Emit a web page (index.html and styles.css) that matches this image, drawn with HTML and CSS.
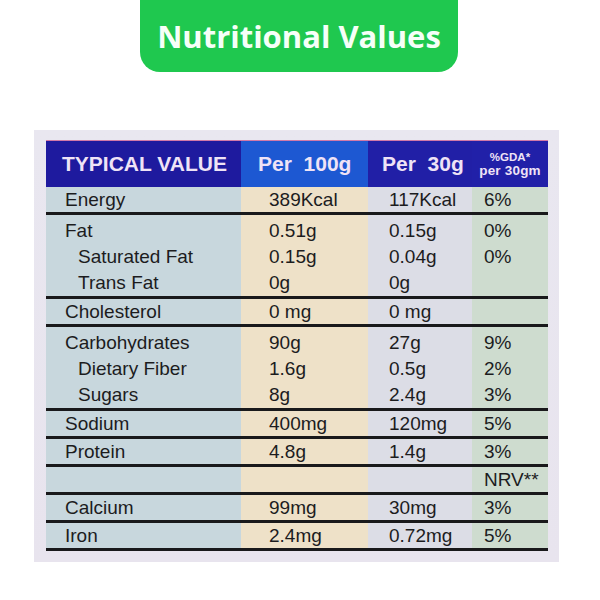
FILE: index.html
```html
<!DOCTYPE html>
<html lang="en">
<head>
<meta charset="utf-8">
<title>Nutritional Values</title>
<link rel="stylesheet" href="styles.css">
</head>
<body>
  <header class="banner"><h1 class="banner-title">Nutritional Values</h1></header>

  <section class="panel">
    <div class="nt">
      <div class="row head">
        <div class="hc hc1">TYPICAL VALUE</div>
        <div class="hc hc2">Per&nbsp; 100g</div>
        <div class="hc hc3">Per&nbsp; 30g</div>
        <div class="hc hc4"><span class="gda1">%GDA*</span><span class="gda2">per 30gm</span></div>
      </div>

      <div class="grp">
        <div class="row"><div class="c n">Energy</div><div class="c v2">389Kcal</div><div class="c v3">117Kcal</div><div class="c v4">6%</div></div>
      </div>

      <div class="grp multi">
        <div class="row sub"><div class="c n">Fat</div><div class="c v2">0.51g</div><div class="c v3">0.15g</div><div class="c v4">0%</div></div>
        <div class="row sub"><div class="c n ind">Saturated Fat</div><div class="c v2">0.15g</div><div class="c v3">0.04g</div><div class="c v4">0%</div></div>
        <div class="row sub"><div class="c n ind">Trans Fat</div><div class="c v2">0g</div><div class="c v3">0g</div><div class="c v4"></div></div>
      </div>

      <div class="grp">
        <div class="row"><div class="c n">Cholesterol</div><div class="c v2">0 mg</div><div class="c v3">0 mg</div><div class="c v4"></div></div>
      </div>

      <div class="grp multi">
        <div class="row sub"><div class="c n">Carbohydrates</div><div class="c v2">90g</div><div class="c v3">27g</div><div class="c v4">9%</div></div>
        <div class="row sub"><div class="c n ind">Dietary Fiber</div><div class="c v2">1.6g</div><div class="c v3">0.5g</div><div class="c v4">2%</div></div>
        <div class="row sub"><div class="c n ind">Sugars</div><div class="c v2">8g</div><div class="c v3">2.4g</div><div class="c v4">3%</div></div>
      </div>

      <div class="grp">
        <div class="row"><div class="c n">Sodium</div><div class="c v2">400mg</div><div class="c v3">120mg</div><div class="c v4">5%</div></div>
      </div>

      <div class="grp">
        <div class="row"><div class="c n">Protein</div><div class="c v2">4.8g</div><div class="c v3">1.4g</div><div class="c v4">3%</div></div>
      </div>

      <div class="grp">
        <div class="row"><div class="c n"></div><div class="c v2"></div><div class="c v3"></div><div class="c v4">NRV**</div></div>
      </div>

      <div class="grp">
        <div class="row"><div class="c n">Calcium</div><div class="c v2">99mg</div><div class="c v3">30mg</div><div class="c v4">3%</div></div>
      </div>

      <div class="grp">
        <div class="row"><div class="c n">Iron</div><div class="c v2">2.4mg</div><div class="c v3">0.72mg</div><div class="c v4">5%</div></div>
      </div>
    </div>
  </section>
</body>
</html>
```

FILE: styles.css
```css
* { box-sizing: border-box; }

html, body {
  margin: 0;
  padding: 0;
  background: #ffffff;
}

body {
  width: 600px;
  height: 600px;
  overflow: hidden;
  font-family: "Liberation Sans", Arial, sans-serif;
}

/* ---------- green banner ---------- */
.banner {
  width: 318px;
  height: 72px;
  margin: 0 0 0 140px;
  background: #1fc84f;
  border-radius: 0 0 20px 20px;
  display: flex;
  align-items: center;
  justify-content: center;
}

.banner-title {
  margin: 0;
  padding-top: 1px;
  font-family: "Open Sans", "Noto Sans", sans-serif;
  font-weight: 700;
  font-size: 31px;
  line-height: 1;
  color: #f6fff8;
  letter-spacing: 0;
}

/* ---------- label panel ---------- */
.panel {
  width: 525px;
  height: 432px;
  margin: 58px 0 0 34px;
  padding: 10px 11px 0 12px;
  background: linear-gradient(to bottom, #e9e7f0, #e8e4ee);
}

.nt {
  width: 502px;
  color: #1c1c1e;
  background: linear-gradient(to right,
    #c8d7dd 0 195px,
    #eee1c8 195px 322px,
    #dcdde6 322px 426px,
    #cedccf 426px 502px);
}

.row {
  display: grid;
  grid-template-columns: 195px 127px 104px 76px;
  height: 25px;
}

/* header */
.head {
  height: 47px;
  border-top: 1px solid #d27aa8;
  background: #1f1ba0;
}

.hc {
  display: flex;
  align-items: center;
  font-weight: 700;
  font-size: 21px;
  color: #efe3f6;
  white-space: nowrap;
}

.hc1 { padding-left: 16px; background: #1e1a9e; }
.hc2 { padding-left: 17px; background: #1d58d2; }
.hc3 { padding-left: 14px; background: #211fa6; }
.hc4 {
  background: #2120a8;
  flex-direction: column;
  justify-content: center;
  padding-top: 1px;
}

.gda1 {
  font-size: 11.5px;
  line-height: 12px;
}

.gda2 {
  font-size: 13.5px;
  line-height: 15px;
  letter-spacing: 0.2px;
}

/* body rows */
.grp {
  border-bottom: 3px solid #19191b;
}

.grp.multi {
  padding-top: 3px;
}

.row.sub {
  height: 26px;
}

.c {
  font-size: 19px;
  line-height: 25px;
  white-space: nowrap;
}

.sub .c { line-height: 26px; }

.n  { padding-left: 19px; }
.n.ind { padding-left: 32px; }
.v2 { padding-left: 28px; }
.v3 { padding-left: 21px; }
.v4 { padding-left: 12px; }
```
